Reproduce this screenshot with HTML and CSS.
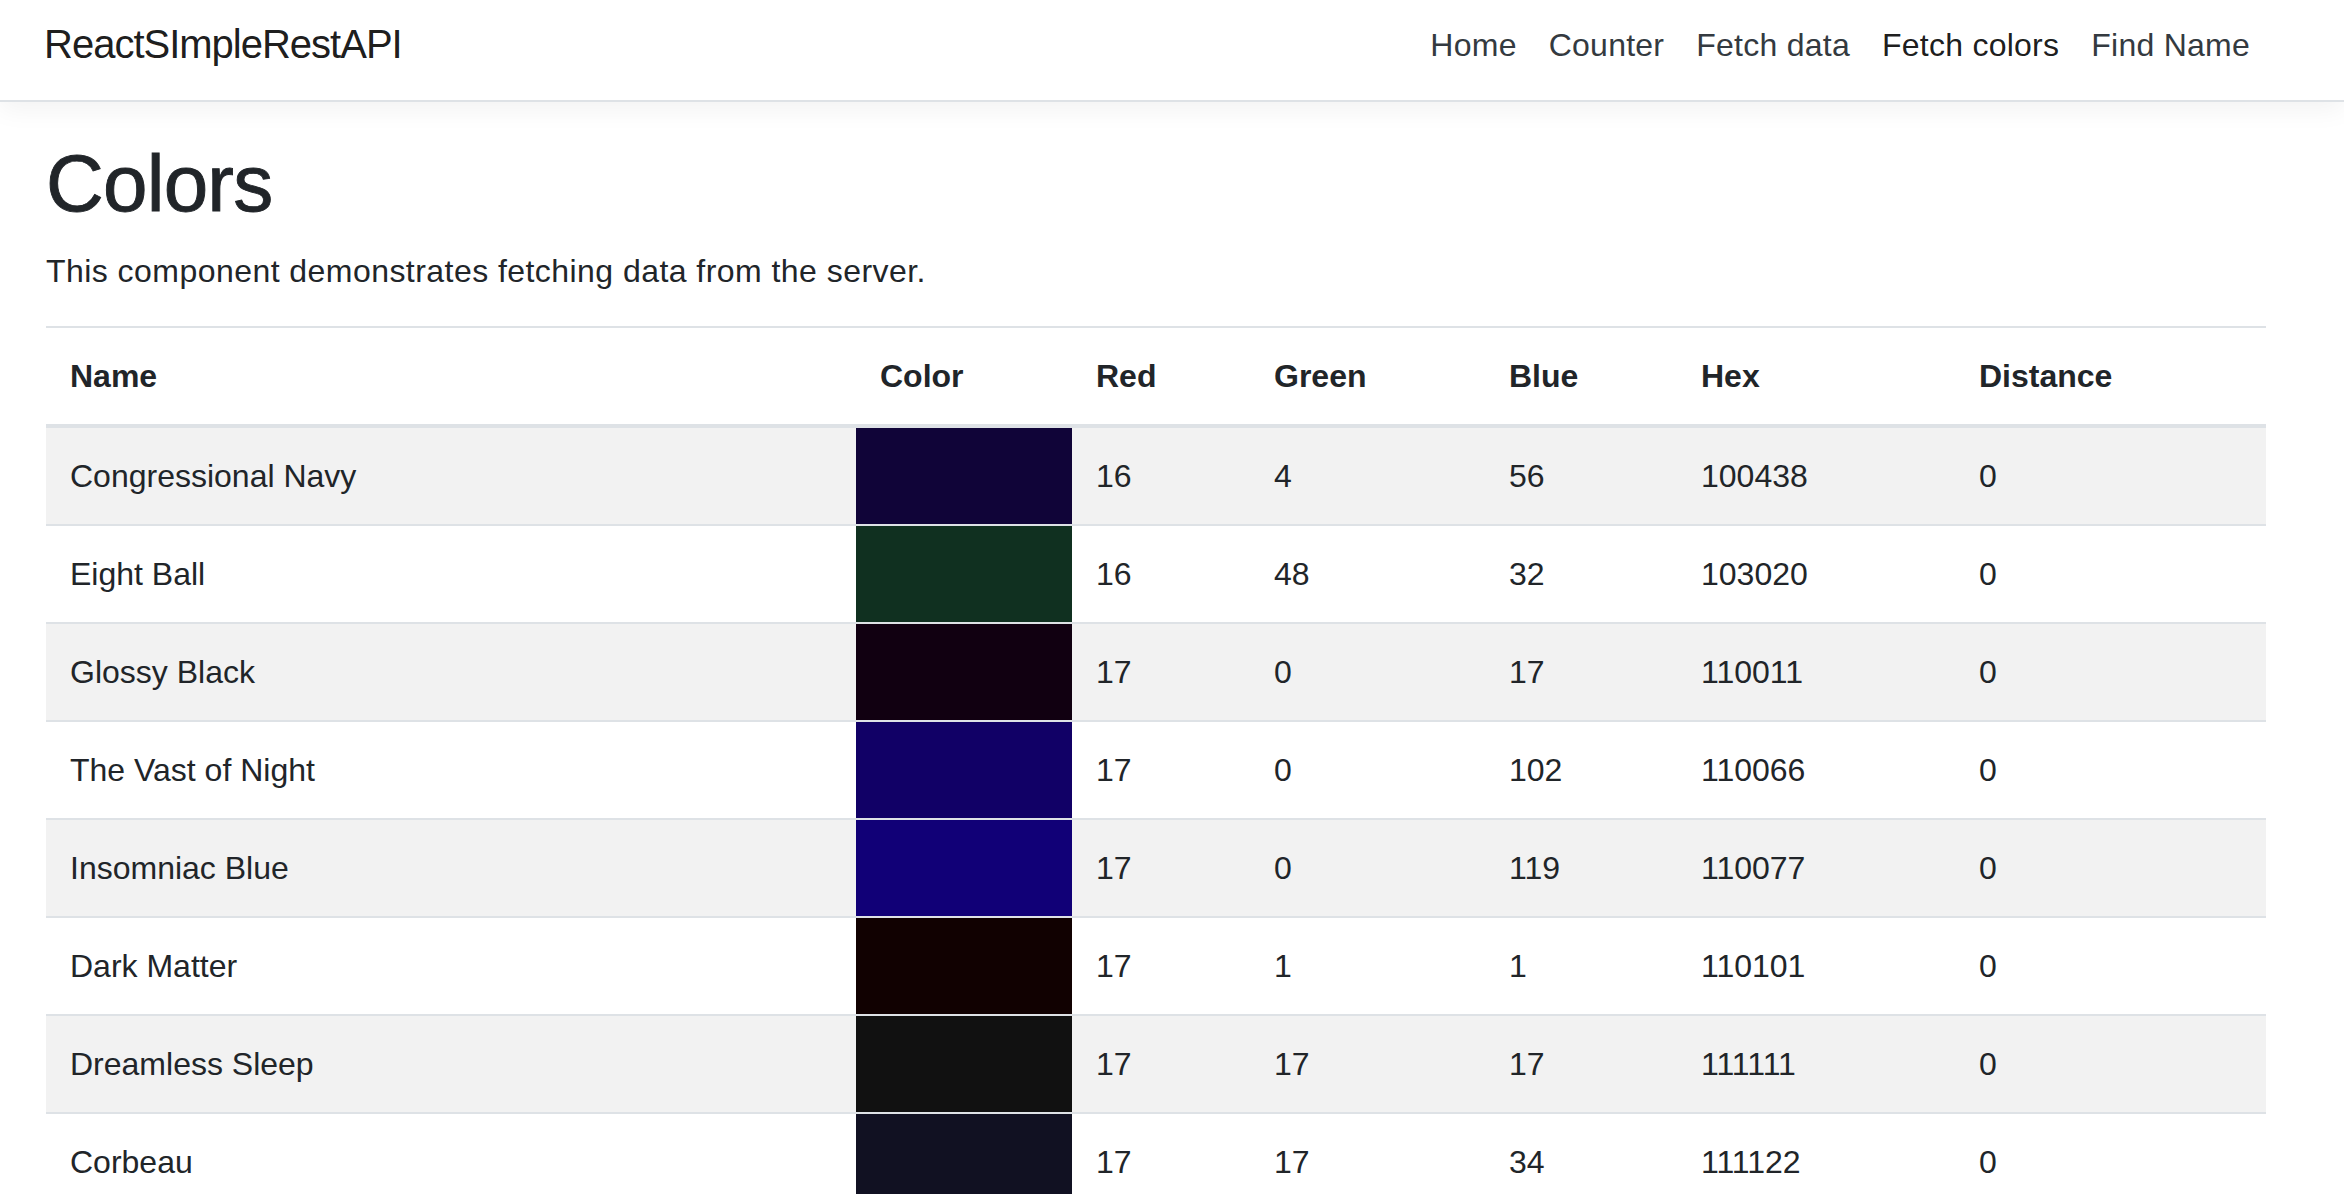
FILE: index.html
```html
<!DOCTYPE html>
<html lang="en">
<head>
<meta charset="utf-8">
<title>ReactSImpleRestAPI</title>
<link rel="stylesheet" href="styles.css">
</head>
<body>
<header class="navbar">
  <div class="nav-inner">
    <a class="brand" href="#">ReactSImpleRestAPI</a>
    <ul class="nav-links">
      <li><a class="nav-link" href="#">Home</a></li>
      <li><a class="nav-link" href="#">Counter</a></li>
      <li><a class="nav-link" href="#">Fetch data</a></li>
      <li><a class="nav-link active" href="#">Fetch colors</a></li>
      <li><a class="nav-link" href="#">Find Name</a></li>
    </ul>
  </div>
</header>
<main class="container">
  <h1 class="title">Colors</h1>
  <p class="lead-text">This component demonstrates fetching data from the server.</p>
  <table class="colors-table">
    <colgroup>
      <col class="c-name">
      <col class="c-color">
      <col class="c-red">
      <col class="c-green">
      <col class="c-blue">
      <col class="c-hex">
      <col class="c-dist">
    </colgroup>
    <thead>
      <tr><th>Name</th><th>Color</th><th>Red</th><th>Green</th><th>Blue</th><th>Hex</th><th>Distance</th></tr>
    </thead>
    <tbody>
      <tr><td>Congressional Navy</td><td class="swatch" style="background:rgb(16,4,56)"></td><td>16</td><td>4</td><td>56</td><td>100438</td><td>0</td></tr>
      <tr><td>Eight Ball</td><td class="swatch" style="background:rgb(16,48,32)"></td><td>16</td><td>48</td><td>32</td><td>103020</td><td>0</td></tr>
      <tr><td>Glossy Black</td><td class="swatch" style="background:rgb(17,0,17)"></td><td>17</td><td>0</td><td>17</td><td>110011</td><td>0</td></tr>
      <tr><td>The Vast of Night</td><td class="swatch" style="background:rgb(17,0,102)"></td><td>17</td><td>0</td><td>102</td><td>110066</td><td>0</td></tr>
      <tr><td>Insomniac Blue</td><td class="swatch" style="background:rgb(17,0,119)"></td><td>17</td><td>0</td><td>119</td><td>110077</td><td>0</td></tr>
      <tr><td>Dark Matter</td><td class="swatch" style="background:rgb(17,1,1)"></td><td>17</td><td>1</td><td>1</td><td>110101</td><td>0</td></tr>
      <tr><td>Dreamless Sleep</td><td class="swatch" style="background:rgb(17,17,17)"></td><td>17</td><td>17</td><td>17</td><td>111111</td><td>0</td></tr>
      <tr><td>Corbeau</td><td class="swatch" style="background:rgb(17,17,34)"></td><td>17</td><td>17</td><td>34</td><td>111122</td><td>0</td></tr>
    </tbody>
  </table>
</main>
</body>
</html>
```
FILE: styles.css
```css
html {
  scrollbar-width: none;
}
html::-webkit-scrollbar,
body::-webkit-scrollbar {
  display: none;
}
body {
  margin: 0;
  font-family: "Liberation Sans", Arial, sans-serif;
  font-size: 32px;
  line-height: 48px;
  color: #212529;
  background: #fff;
}

.navbar {
  height: 100px;
  border-bottom: 2px solid #dee2e6;
  box-shadow: 0 8px 24px rgba(0, 0, 0, 0.05);
  background: #fff;
  position: relative;
}
.nav-inner {
  width: 2220px;
  margin-left: 46px;
  display: flex;
  justify-content: space-between;
  align-items: flex-start;
  padding-top: 20px;
}
.brand {
  margin-left: -2px;
  font-size: 40px;
  line-height: 48px;
  letter-spacing: -1px;
  color: rgba(0, 0, 0, 0.9);
  text-decoration: none;
}
.nav-links {
  list-style: none;
  margin: 0;
  padding: 0;
  display: flex;
  margin-top: 1px;
}
.nav-link {
  display: block;
  padding: 0 16px;
  font-size: 32px;
  line-height: 48px;
  letter-spacing: 0.25px;
  color: #343a40;
  text-decoration: none;
}
.nav-link.active {
  color: rgba(0, 0, 0, 0.9);
}

.container {
  width: 2220px;
  margin-left: 46px;
}
.title {
  margin: 34px 0 15px;
  font-size: 80px;
  line-height: 96px;
  font-weight: 500;
  letter-spacing: -0.8px;
  -webkit-text-stroke: 0.9px #212529;
}
.lead-text {
  margin: 0 0 31px;
  letter-spacing: 0.45px;
}

.colors-table {
  width: 2220px;
  table-layout: fixed;
  border-collapse: collapse;
}
.c-name { width: 810px; }
.c-color { width: 216px; }
.c-red { width: 178px; }
.c-green { width: 235px; }
.c-blue { width: 192px; }
.c-hex { width: 278px; }
.c-dist { width: 311px; }

.colors-table th,
.colors-table td {
  padding: 24px;
  text-align: left;
  vertical-align: top;
  border-top: 2px solid #dee2e6;
}
.colors-table th {
  font-weight: 700;
}
.colors-table thead th {
  border-bottom: 4px solid #dee2e6;
}
.colors-table tbody tr:nth-child(odd) {
  background: #f2f2f2;
}
.colors-table td.swatch {
  padding: 0;
}
```
